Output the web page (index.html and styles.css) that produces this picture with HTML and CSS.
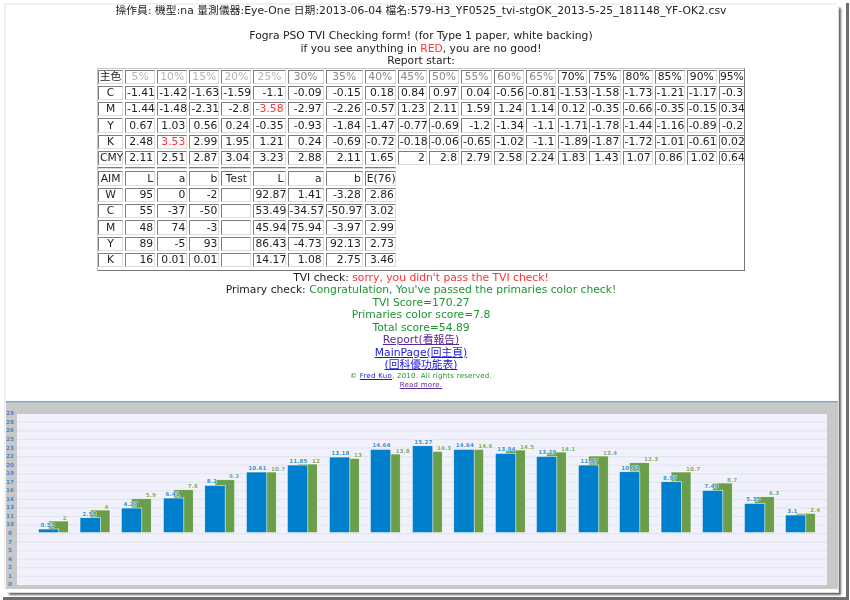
FILE: index.html
```html
<!DOCTYPE html>
<html lang="zh-Hant">
<head>
<meta charset="utf-8">
<title>Fogra PSO TVI Checking form</title>
<link rel="stylesheet" href="styles.css">
</head>
<body>
<div class="shot">
<div class="window">
<div class="report">
<p class="meta">操作員: 機型:na 量測儀器:Eye-One 日期:2013-06-04 檔名:579-H3_YF0525_tvi-stgOK_2013-5-25_181148_YF-OK2.csv</p>
<p class="gap">Fogra PSO TVI Checking form! (for Type 1 paper, white backing)</p>
<p>if you see anything in <span class="red">RED</span>, you are no good!</p>
<p>Report start:</p>
<div class="tablebox">
<table class="tvi">
<colgroup><col class="w25"><col class="w30"><col class="w30"><col class="w30"><col class="w30"><col class="w32"><col class="w36"><col class="w37"><col class="w31"><col class="w29"><col class="w30"><col class="w31"><col class="w30"><col class="w30"><col class="w29"><col class="w31"><col class="w30"><col class="w30"><col class="w30"><col class="w26"></colgroup>
<tr class="head"><td>主色</td><td class="pale">5%</td><td class="pale">10%</td><td class="pale">15%</td><td class="pale">20%</td><td class="pale">25%</td><td class="mid">30%</td><td class="mid">35%</td><td class="mid">40%</td><td class="mid">45%</td><td class="mid">50%</td><td class="mid">55%</td><td class="mid">60%</td><td class="mid">65%</td><td>70%</td><td>75%</td><td>80%</td><td>85%</td><td>90%</td><td>95%</td></tr>
<tr><td>C</td><td>-1.41</td><td>-1.42</td><td>-1.63</td><td>-1.59</td><td>-1.1</td><td>-0.09</td><td>-0.15</td><td>0.18</td><td>0.84</td><td>0.97</td><td>0.04</td><td>-0.56</td><td>-0.81</td><td>-1.53</td><td>-1.58</td><td>-1.73</td><td>-1.21</td><td>-1.17</td><td>-0.3</td></tr>
<tr><td>M</td><td>-1.44</td><td>-1.48</td><td>-2.31</td><td>-2.8</td><td class="red">-3.58</td><td>-2.97</td><td>-2.26</td><td>-0.57</td><td>1.23</td><td>2.11</td><td>1.59</td><td>1.24</td><td>1.14</td><td>0.12</td><td>-0.35</td><td>-0.66</td><td>-0.35</td><td>-0.15</td><td>0.34</td></tr>
<tr><td>Y</td><td>0.67</td><td>1.03</td><td>0.56</td><td>0.24</td><td>-0.35</td><td>-0.93</td><td>-1.84</td><td>-1.47</td><td>-0.77</td><td>-0.69</td><td>-1.2</td><td>-1.34</td><td>-1.1</td><td>-1.71</td><td>-1.78</td><td>-1.44</td><td>-1.16</td><td>-0.89</td><td>-0.2</td></tr>
<tr><td>K</td><td>2.48</td><td class="red">3.53</td><td>2.99</td><td>1.95</td><td>1.21</td><td>0.24</td><td>-0.69</td><td>-0.72</td><td>-0.18</td><td>-0.06</td><td>-0.65</td><td>-1.02</td><td>-1.1</td><td>-1.89</td><td>-1.87</td><td>-1.72</td><td>-1.01</td><td>-0.61</td><td>0.02</td></tr>
<tr><td>CMY</td><td>2.11</td><td>2.51</td><td>2.87</td><td>3.04</td><td>3.23</td><td>2.88</td><td>2.11</td><td>1.65</td><td>2</td><td>2.8</td><td>2.79</td><td>2.58</td><td>2.24</td><td>1.83</td><td>1.43</td><td>1.07</td><td>0.86</td><td>1.02</td><td>0.64</td></tr>
<tr class="thin"><td></td><td></td><td></td><td></td><td></td><td></td><td></td><td></td><td></td></tr>
<tr><td>AIM</td><td>L</td><td>a</td><td>b</td><td class="ctr">Test</td><td>L</td><td>a</td><td>b</td><td class="ctr">E(76)</td></tr>
<tr><td>W</td><td>95</td><td>0</td><td>-2</td><td></td><td>92.87</td><td>1.41</td><td>-3.28</td><td>2.86</td></tr>
<tr><td>C</td><td>55</td><td>-37</td><td>-50</td><td></td><td>53.49</td><td>-34.57</td><td>-50.97</td><td>3.02</td></tr>
<tr><td>M</td><td>48</td><td>74</td><td>-3</td><td></td><td>45.94</td><td>75.94</td><td>-3.97</td><td>2.99</td></tr>
<tr><td>Y</td><td>89</td><td>-5</td><td>93</td><td></td><td>86.43</td><td>-4.73</td><td>92.13</td><td>2.73</td></tr>
<tr><td>K</td><td>16</td><td>0.01</td><td>0.01</td><td></td><td>14.17</td><td>1.08</td><td>2.75</td><td>3.46</td></tr>
</table>
</div>
<p>TVI check: <span class="red">sorry, you didn't pass the TVI check!</span></p>
<p>Primary check: <span class="green">Congratulation, You've passed the primaries color check!</span></p>
<p class="green">TVI Score=170.27</p>
<p class="green">Primaries color score=7.8</p>
<p class="green">Total score=54.89</p>
<p><a class="seen" href="#">Report(看報告)</a></p>
<p><a href="#">MainPage(回主頁)</a></p>
<p><a href="#">(回科優功能表)</a></p>
<p class="small green">© <a href="#">Fred Kuo</a>, 2010. All rights reserved.</p>
<p class="small"><a class="seen" href="#">Read more.</a></p>
</div>
<svg class="chart" viewBox="6 401 832 188" width="832" height="188" role="img" aria-label="TVI chart">
<rect class="panel" x="6" y="401" width="832" height="188"/>
<rect class="rule" x="6" y="401" width="832" height="1.4"/>
<rect class="plot" x="17" y="414" width="810" height="171"/>
<g class="grid">
<path d="M17 422.3H827M17 430.9H827M17 439.5H827M17 448H827M17 456.6H827M17 465.2H827M17 473.7H827M17 482.3H827M17 490.8H827M17 499.4H827M17 507.9H827M17 516.5H827M17 525H827M17 533.6H827M17 542.1H827M17 550.7H827M17 559.2H827M17 567.8H827M17 576.3H827"/>
</g>
<g class="axis">
<text x="10" y="415.3">29</text><text x="10" y="423.8">28</text><text x="10" y="432.4">26</text><text x="10" y="440.9">25</text><text x="10" y="449.5">23</text><text x="10" y="458">22</text><text x="10" y="466.6">20</text><text x="10" y="475.1">19</text><text x="10" y="483.7">17</text><text x="10" y="492.2">16</text><text x="10" y="500.8">14</text><text x="10" y="509.3">13</text><text x="10" y="517.9">11</text><text x="10" y="526.4">10</text><text x="10" y="535">8</text><text x="10" y="543.5">7</text><text x="10" y="552.1">5</text><text x="10" y="560.6">4</text><text x="10" y="569.2">2</text><text x="10" y="577.7">1</text><text x="10" y="586">0</text>
</g>
<g class="bars">
<rect class="gb" x="48.3" y="521" width="20" height="11.7"/><rect class="bb" x="38.3" y="529" width="20.5" height="3.7"/><text class="bt" x="40.5" y="527">0.53</text><text class="gt" x="62.7" y="519.5">2</text>
<rect class="gb" x="90" y="510" width="20" height="22.7"/><rect class="bb" x="80" y="517.7" width="20.5" height="15"/><text class="bt" x="82.2" y="515.7">2.58</text><text class="gt" x="104.4" y="508.5">4</text>
<rect class="gb" x="131.3" y="498.7" width="20" height="34"/><rect class="bb" x="121.3" y="508" width="20.5" height="24.7"/><text class="bt" x="123.5" y="506">4.27</text><text class="gt" x="145.7" y="497.2">5.9</text>
<rect class="gb" x="173.3" y="489.7" width="20" height="43"/><rect class="bb" x="163.3" y="498" width="20.5" height="34.7"/><text class="bt" x="165.5" y="496">6.41</text><text class="gt" x="187.7" y="488.2">7.6</text>
<rect class="gb" x="214.7" y="479.7" width="20" height="53"/><rect class="bb" x="204.7" y="485.3" width="20.5" height="47.4"/><text class="bt" x="206.7" y="483.3">8.2</text><text class="gt" x="229" y="478.2">9.3</text>
<rect class="gb" x="256.3" y="472" width="20" height="60.7"/><rect class="bb" x="246.3" y="472" width="20.5" height="60.7"/><text class="bt" x="248.3" y="470">10.61</text><text class="gt" x="271" y="470.5">10.7</text>
<rect class="gb" x="297.3" y="464" width="20" height="68.7"/><rect class="bb" x="287.3" y="465" width="20.5" height="67.7"/><text class="bt" x="289.3" y="463">11.85</text><text class="gt" x="312" y="462.5">12</text>
<rect class="gb" x="339.3" y="458.3" width="20" height="74.4"/><rect class="bb" x="329.3" y="457" width="20.5" height="75.7"/><text class="bt" x="331.3" y="455">13.18</text><text class="gt" x="354" y="456.8">13</text>
<rect class="gb" x="380.3" y="454" width="20" height="78.7"/><rect class="bb" x="370.3" y="449.3" width="20.5" height="83.4"/><text class="bt" x="372.3" y="447.3">14.64</text><text class="gt" x="395.5" y="452.5">13.8</text>
<rect class="gb" x="422.3" y="451.3" width="20" height="81.4"/><rect class="bb" x="412.3" y="445.7" width="20.5" height="87"/><text class="bt" x="414.3" y="443.7">15.27</text><text class="gt" x="437" y="449.8">14.3</text>
<rect class="gb" x="463.7" y="449.3" width="20" height="83.4"/><rect class="bb" x="453.7" y="449.3" width="20.5" height="83.4"/><text class="bt" x="455.7" y="447.3">14.64</text><text class="gt" x="478.3" y="447.8">14.6</text>
<rect class="gb" x="505.3" y="450" width="20" height="82.7"/><rect class="bb" x="495.3" y="453.3" width="20.5" height="79.4"/><text class="bt" x="497.3" y="451.3">13.94</text><text class="gt" x="520" y="448.5">14.5</text>
<rect class="gb" x="546.3" y="452" width="20" height="80.7"/><rect class="bb" x="536.3" y="456.3" width="20.5" height="76.4"/><text class="bt" x="538.3" y="454.3">13.29</text><text class="gt" x="561" y="450.5">14.1</text>
<rect class="gb" x="588.3" y="456" width="20" height="76.7"/><rect class="bb" x="578.3" y="465" width="20.5" height="67.7"/><text class="bt" x="580.3" y="463">11.87</text><text class="gt" x="603" y="454.5">13.4</text>
<rect class="gb" x="629.3" y="462.7" width="20" height="70"/><rect class="bb" x="619.3" y="471.7" width="20.5" height="61"/><text class="bt" x="621.3" y="469.7">10.72</text><text class="gt" x="644" y="461.2">12.3</text>
<rect class="gb" x="671" y="472" width="20" height="60.7"/><rect class="bb" x="661" y="481.7" width="20.5" height="51"/><text class="bt" x="663" y="479.7">8.97</text><text class="gt" x="686" y="470.5">10.7</text>
<rect class="gb" x="712.3" y="483" width="20" height="49.7"/><rect class="bb" x="702.3" y="490.3" width="20.5" height="42.4"/><text class="bt" x="704.3" y="488.3">7.49</text><text class="gt" x="727" y="481.5">8.7</text>
<rect class="gb" x="754.3" y="496.7" width="20" height="36"/><rect class="bb" x="744.3" y="503.3" width="20.5" height="29.4"/><text class="bt" x="746.3" y="501.3">5.15</text><text class="gt" x="769" y="495.2">6.3</text>
<rect class="gb" x="795.3" y="513.3" width="20" height="19.4"/><rect class="bb" x="785.3" y="515" width="20.5" height="17.7"/><text class="bt" x="787.3" y="513">3.1</text><text class="gt" x="810" y="511.8">3.4</text>
</g>
</svg>
</div>
</div>
</body>
</html>
```
FILE: styles.css
```css
* { box-sizing: border-box; }
html, body { margin: 0; padding: 0; background: #fff; }
body { width: 850px; height: 600px; overflow: hidden; }
.shot {
  margin: 3px 0 0 3px;
  width: 846px;
  height: 597px;
  padding: 2px 0 0 3px;
  border-right: 3px solid #6e6e6e;
  border-bottom: 3px solid #6e6e6e;
}
.window {
  width: 832px;
  height: 587px;
  background: #fff;
  box-shadow: 1px 1px 0 #ddd, 3px 3px 2px #666, -2px -2px 0 #f1f1f1;
  font-family: "DejaVu Sans", Verdana, "Noto Sans CJK TC", sans-serif;
  font-size: 10.75px;
  line-height: 12.5px;
  color: #222;
  filter: blur(0.3px);
}
.report { width: 830px; height: 396px; text-align: center; }
p { margin: 0; }
.meta { letter-spacing: 0.05px; }
.gap { margin-top: 12.5px; }
.red { color: #f33; }
.green { color: #1f9430; }
a { color: #1a1ae6; }
a.seen { color: #5b2a96; }
.small { font-size: 7px; line-height: 9px; letter-spacing: 0.25px; }
.tablebox {
  width: 648px;
  height: 203px;
  margin: 0 auto 1px;
  border: 1px solid;
  border-color: #c4c4c4 #777 #777 #c4c4c4;
  overflow: hidden;
}
.tvi {
  table-layout: fixed;
  border-collapse: separate;
  border-spacing: 2px;
  margin: -1px 0 0 -2px;
  width: 651px;
  font-size: 10.75px;
  line-height: 12px;
}
.tvi td {
  height: 14.33px;
  padding: 0 1px;
  text-align: right;
  white-space: nowrap;
  overflow: visible;
  border: 1px solid;
  border-color: #7d7d7d #dcdcdc #dcdcdc #7d7d7d;
}
.tvi td:first-child, .tvi .head td, .tvi .ctr { text-align: center; }
.tvi .head td { padding: 0; }
.tvi .thin td { height: 2px; line-height: 1px; font-size: 1px; }
.tvi .pale { color: #b4b4b4; }
.tvi .mid { color: #888; }
.tvi .red { color: #f33; }
.w25 { width: 25px; } .w26 { width: 26px; } .w29 { width: 29px; } .w30 { width: 30px; }
.w31 { width: 31px; } .w32 { width: 32px; } .w36 { width: 36px; } .w37 { width: 37px; }
.chart { display: block; }
.panel { fill: #c8c8c8; }
.rule { fill: #6aaedc; }
.plot { fill: #f1f1fd; }
.grid path { fill: none; stroke: #e4e4ec; stroke-width: 1.1; }
.axis text { font-size: 5.6px; font-weight: bold; fill: #3d8ec9; text-anchor: middle; }
.bb, .gb { stroke: #fff; stroke-width: 0.7; stroke-opacity: 0.85; }
.bb { fill: #0080cc; }
.gb { fill: #6a9e4a; }
.bt, .gt {
  font-size: 5.6px;
  paint-order: stroke;
  stroke: #fff;
  stroke-width: 1px;
  stroke-opacity: 0.8;
  letter-spacing: 0.1px;
}
.bt { fill: #3b92cf; font-weight: bold; }
.gt { fill: #84a96a; font-weight: bold; }
```
